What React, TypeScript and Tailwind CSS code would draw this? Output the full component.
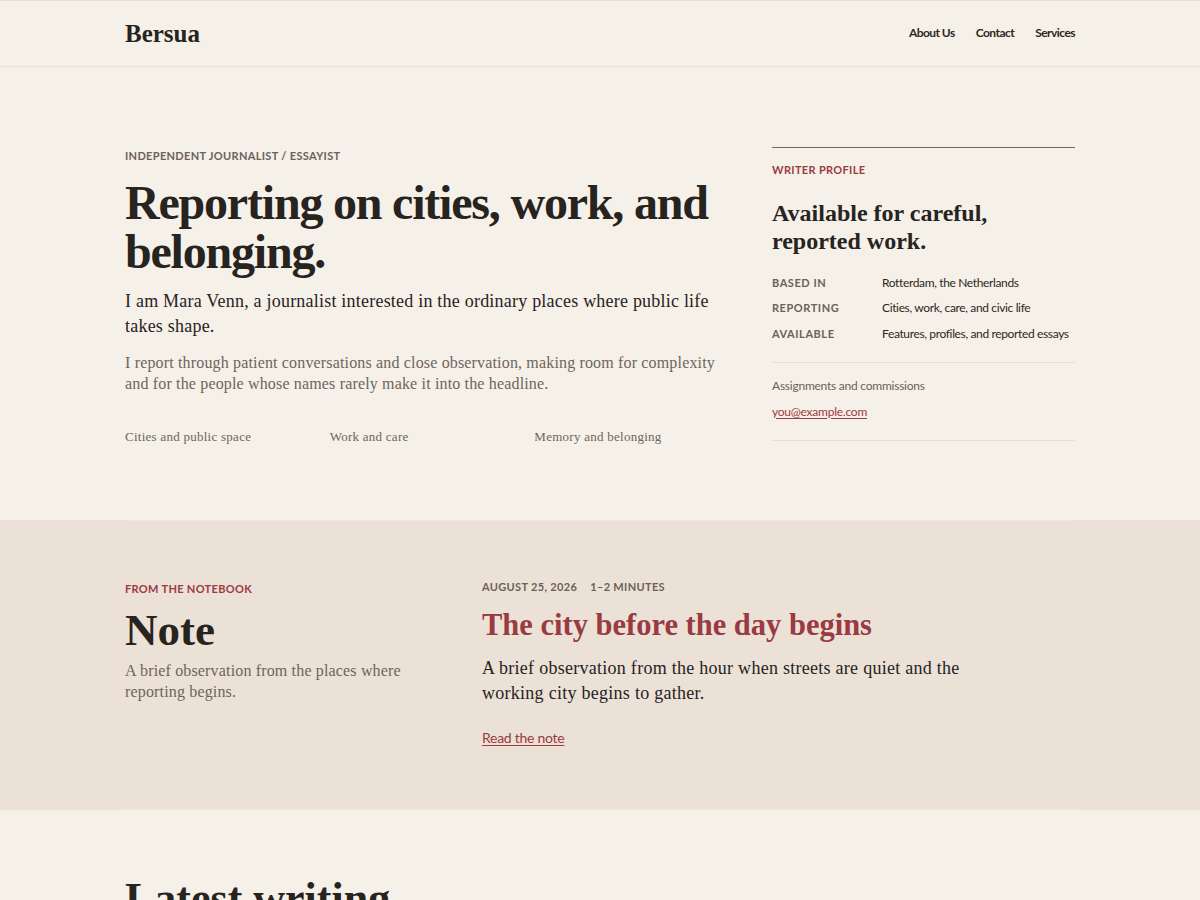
import { ReactNode } from 'react';

const serif = 'font-["Liberation_Serif",serif]';
const sans = 'font-["Lato","Liberation_Sans",sans-serif]';

const profile = [
  { label: 'Based in', value: 'Rotterdam, the Netherlands' },
  { label: 'Reporting', value: 'Cities, work, care, and civic life' },
  { label: 'Available', value: 'Features, profiles, and reported essays' },
];

const topics = ['Cities and public space', 'Work and care', 'Memory and belonging'];

function Eyebrow({ children, tone = 'muted' }: { children: ReactNode; tone?: 'muted' | 'accent' }) {
  return (
    <p
      className={`${sans} text-[11px] font-bold uppercase tracking-[0.03em] ${
        tone === 'accent' ? 'text-[#9a3b43]' : 'text-[#6b6259]'
      }`}
    >
      {children}
    </p>
  );
}

export default function App() {
  return (
    <div className="min-h-screen bg-[#f5f0e8] text-[#27231f]">
      {/* Header */}
      <header className="border-y border-[#e9e1d5]">
        <div className="mx-auto flex h-[65px] w-[950px] items-center justify-between">
          <a className={`${serif} text-[25px] font-bold`}>Bersua</a>
          <nav className={`${sans} -mt-[2px] flex gap-[21px] text-[12px] font-bold tracking-[-0.045em] text-[#2d2823]`}>
            <a>About Us</a>
            <a>Contact</a>
            <a>Services</a>
          </nav>
        </div>
      </header>

      {/* Hero */}
      <section className="mx-auto grid w-[950px] grid-cols-[1fr_303px] gap-[57px] pt-[78px] pb-[74px]">
        <div>
          <div className="pt-[3px]">
            <Eyebrow>Independent journalist / Essayist</Eyebrow>
          </div>
          <h1 className={`${serif} mt-[13px] text-[48px] font-bold leading-[49px] tracking-[-0.025em]`}>
            Reporting on cities, work, and belonging.
          </h1>
          <p className={`${serif} mt-[13px] text-[18px] leading-[25px] tracking-[0.012em]`}>
            I am Mara Venn, a journalist interested in the ordinary places where public life takes shape.
          </p>
          <p className={`${serif} mt-[13px] text-[16px] leading-[21px] tracking-[0.01em] text-[#6d655d]`}>
            I report through patient conversations and close observation, making room for complexity and for
            the people whose names rarely make it into the headline.
          </p>
          <ul className={`${serif} mt-[33px] grid grid-cols-3 gap-6 text-[13px] tracking-[0.02em] text-[#6d655d]`}>
            {topics.map((t) => (
              <li key={t}>{t}</li>
            ))}
          </ul>
        </div>

        <aside className="mt-[2px] border-t border-[#6f6a63]">
          <div className="pt-[14px]">
            <Eyebrow tone="accent">Writer profile</Eyebrow>
          </div>
          <h2 className={`${serif} mt-[20px] text-[24px] font-bold leading-[28px]`}>
            Available for careful, reported work.
          </h2>
          <dl className={`${sans} mt-[19px] space-y-[7.5px] pb-[19px]`}>
            {profile.map((row) => (
              <div key={row.label} className="grid grid-cols-[110px_1fr] items-baseline">
                <dt className="text-[11px] font-bold uppercase tracking-[0.05em] text-[#6b6259]">{row.label}</dt>
                <dd className="text-[12px] tracking-[-0.03em] text-[#2d2823]">{row.value}</dd>
              </div>
            ))}
          </dl>
          <div className={`${sans} border-y border-[#e6ddd0] pt-[14px] pb-[19px] text-[12px] tracking-[-0.02em]`}>
            <p className="text-[#6b6259]">Assignments and commissions</p>
            <a className="mt-[8px] inline-block text-[#9a3b43] underline underline-offset-2">you@example.com</a>
          </div>
        </aside>
      </section>

      {/* Notebook */}
      <section className="bg-[#ebe1d6]">
        <div className="mx-auto grid w-[950px] grid-cols-[297px_1fr] gap-[60px] border-y border-[#efe8df] pt-[58px] pb-[60px]">
          <div>
            <div className="pt-[2px]">
              <Eyebrow tone="accent">From the notebook</Eyebrow>
            </div>
            <h2 className={`${serif} mt-[6px] text-[45px] font-bold leading-[52px]`}>Note</h2>
            <p className={`${serif} mt-[4px] text-[16px] leading-[21px] tracking-[0.01em] text-[#6d655d]`}>
              A brief observation from the places where reporting begins.
            </p>
          </div>
          <article>
            <p className={`${sans} flex gap-[13px] text-[11px] font-bold uppercase tracking-[0.03em] text-[#6b6259]`}>
              <span>August 25, 2026</span>
              <span>1–2 minutes</span>
            </p>
            <h3 className={`${serif} mt-[11px] text-[30.5px] font-bold leading-[36px] text-[#9a3b43]`}>
              The city before the day begins
            </h3>
            <p className={`${serif} mt-[13px] max-w-[500px] text-[18px] leading-[25px] tracking-[0.015em]`}>
              A brief observation from the hour when streets are quiet and the working city begins to gather.
            </p>
            <a className={`${sans} mt-[21px] inline-block text-[14px] tracking-[-0.02em] text-[#9a3b43] underline underline-offset-2`}>
              Read the note
            </a>
          </article>
        </div>
      </section>

      {/* Latest writing */}
      <section className="mx-auto w-[950px] pt-[64px] pb-[80px]">
        <h2 className={`${serif} text-[44px] font-bold leading-[50px]`}>Latest writing</h2>
      </section>
    </div>
  );
}
